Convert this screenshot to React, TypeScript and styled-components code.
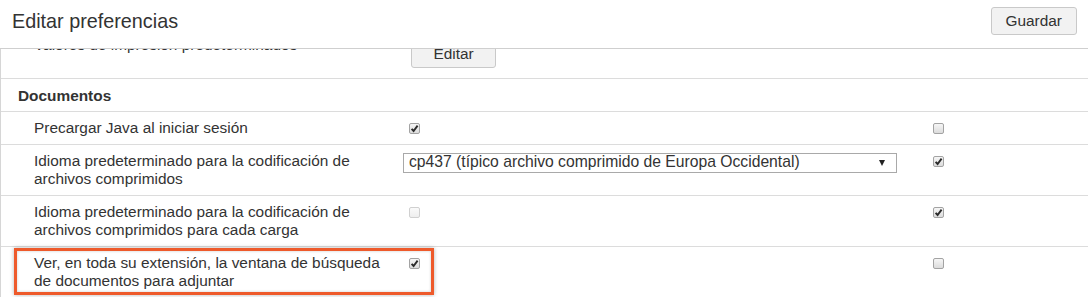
import React, { useLayoutEffect, useRef } from 'react';
import styled, { createGlobalStyle, css } from 'styled-components';

const GlobalStyle = createGlobalStyle`
  html, body {
    margin: 0;
    padding: 0;
    background: #fff;
  }
  body {
    font-family: "Liberation Sans", Arial, sans-serif;
    color: #333;
  }
`;

const Page = styled.div`
  height: 100vh;
  display: flex;
  flex-direction: column;
  overflow: hidden;
`;

const Header = styled.header`
  flex: none;
  height: 49px;
  display: flex;
  align-items: flex-start;
  justify-content: space-between;
  padding: 7px 11px 0 12px;
  box-sizing: border-box;
  border-bottom: 1px solid #cfcfcf;
`;

const Title = styled.h1`
  margin: 2px 0 0;
  font-size: 19.8px;
  font-weight: normal;
  line-height: 24px;
  color: #333;
`;

const Button = styled.button`
  height: 28px;
  padding: 0 14px;
  font-family: "Liberation Sans", Arial, sans-serif;
  font-size: 15.4px;
  color: #333;
  background: #f2f2f2;
  border: 1px solid #c9c9c9;
  border-radius: 3px;
  cursor: pointer;
`;

const Panel = styled.div`
  position: relative;
  flex: 1;
  min-height: 0;
  overflow: hidden;
  border-left: 1px solid #d6d6d6;
`;

const Row = styled.div`
  position: relative;
  display: grid;
  grid-template-columns: 402px 524px 1fr;
  border-bottom: 1px solid #dcdcdc;
  font-size: 15.4px;
  line-height: 18.5px;
`;

const SectionRow = styled.div`
  border-bottom: 1px solid #dcdcdc;
  padding: 8px 0 6px 17px;
  font-size: 15.4px;
  line-height: 18px;
  font-weight: bold;
`;

const Label = styled.div<{ $top?: number }>`
  padding: ${(p) => p.$top ?? 7}px 10px 6px 33px;
`;

const Cell = styled.div`
  padding: 7px 0 6px;
  display: flex;
  align-items: flex-start;
`;

const EditButton = styled(Button)`
  margin: 1px 0 4px 8px;
  width: 85px;
`;

const Box = styled.span<{ $checked?: boolean; $disabled?: boolean }>`
  display: inline-flex;
  align-items: center;
  justify-content: center;
  width: 11px;
  height: 11px;
  margin: 4px 0 0 6px;
  box-sizing: border-box;
  border: 1px solid #a3a3a3;
  border-radius: 2px;
  background: linear-gradient(#f6f6f6, #dcdcdc);
  ${(p) =>
    p.$disabled &&
    css`
      border-color: #d0d0d0;
      background: linear-gradient(#fafafa, #eeeeee);
    `}
`;

const Check = ({ checked, disabled }: { checked?: boolean; disabled?: boolean }) => (
  <Box $checked={checked} $disabled={disabled}>
    {checked && (
      <svg width="9" height="9" viewBox="0 0 9 9">
        <path d="M1.6 4.8 L3.6 7 L7.6 1.6" fill="none" stroke="#2b2b2b" strokeWidth="1.9" />
      </svg>
    )}
  </Box>
);

const Select = styled.div`
  width: 494px;
  height: 20px;
  margin-top: 1px;
  box-sizing: border-box;
  border: 1px solid #a9a9a9;
  background: #fff;
  display: flex;
  align-items: center;
  justify-content: space-between;
  padding: 0 11px 0 5px;
  font-size: 15.7px;
  color: #333;
`;

const Arrow = styled.span`
  width: 0;
  height: 0;
  border-left: 3px solid transparent;
  border-right: 3px solid transparent;
  border-top: 6px solid #222;
`;

const Highlight = styled.div`
  position: absolute;
  left: 13px;
  top: 1px;
  width: 420px;
  height: 47px;
  box-sizing: border-box;
  border: 3px solid #ee5a2b;
  box-shadow: 0 0 4px rgba(0, 0, 0, 0.3), inset 0 0 3px rgba(0, 0, 0, 0.2);
  pointer-events: none;
`;

export default function App() {
  const panelRef = useRef<HTMLDivElement>(null);
  const rowRef = useRef<HTMLDivElement>(null);

  useLayoutEffect(() => {
    if (panelRef.current && rowRef.current) {
      panelRef.current.scrollTop = rowRef.current.offsetTop + 17;
    }
  }, []);

  return (
    <Page>
      <GlobalStyle />
      <Header>
        <Title>Editar preferencias</Title>
        <Button>Guardar</Button>
      </Header>
      <Panel ref={panelRef}>
        <Row ref={rowRef}>
          <Label $top={4}>Valores de impresión predeterminados</Label>
          <Cell>
            <EditButton>Editar</EditButton>
          </Cell>
          <Cell />
        </Row>
        <SectionRow>Documentos</SectionRow>
        <Row>
          <Label>Precargar Java al iniciar sesión</Label>
          <Cell>
            <Check checked />
          </Cell>
          <Cell>
            <Check />
          </Cell>
        </Row>
        <Row>
          <Label>Idioma predeterminado para la codificación de archivos comprimidos</Label>
          <Cell>
            <Select>
              <span>cp437 (típico archivo comprimido de Europa Occidental)</span>
              <Arrow />
            </Select>
          </Cell>
          <Cell>
            <Check checked />
          </Cell>
        </Row>
        <Row>
          <Label>Idioma predeterminado para la codificación de archivos comprimidos para cada carga</Label>
          <Cell>
            <Check disabled />
          </Cell>
          <Cell>
            <Check checked />
          </Cell>
        </Row>
        <Row>
          <Label>Ver, en toda su extensión, la ventana de búsqueda de documentos para adjuntar</Label>
          <Cell>
            <Check checked />
          </Cell>
          <Cell>
            <Check />
          </Cell>
          <Highlight />
        </Row>
      </Panel>
    </Page>
  );
}
